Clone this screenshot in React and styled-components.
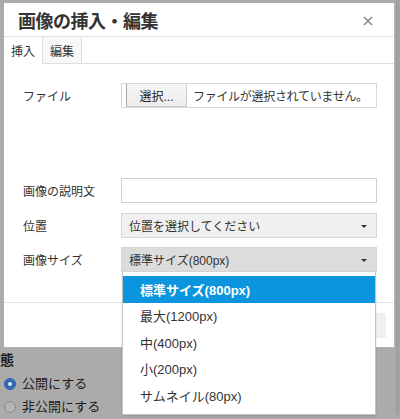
import React from "react";
import styled, { createGlobalStyle } from "styled-components";

const GlobalStyle = createGlobalStyle`
  html, body { margin: 0; padding: 0; }
  body {
    background: #ababab;
    font-family: "Liberation Sans", "Noto Sans CJK JP", sans-serif;
    color: #333;
  }
`;

const Stage = styled.div`
  position: relative;
  width: 400px;
  height: 419px;
  overflow: hidden;
  background: #ababab;
`;

/* page behind the overlay */
const BackPage = styled.div`
  display: flex;
  flex-direction: column;
  padding-top: 352px;
  color: #1b1b1b;
`;

const BackHeading = styled.div`
  font-weight: bold;
  font-size: 14px;
  line-height: 16px;
  margin-left: -14px;
  margin-bottom: 7px;
`;

const RadioList = styled.div`
  display: flex;
  flex-direction: column;
  gap: 5px;
  padding-left: 4px;
`;

const RadioRow = styled.label`
  display: flex;
  align-items: center;
  gap: 6px;
  font-size: 13px;
  line-height: 18px;
`;

const RadioDot = styled.span`
  width: 12px;
  height: 12px;
  border-radius: 50%;
  box-sizing: border-box;
  background: ${(p) => (p.$on ? "#2e6cb8" : "#b4b4b4")};
  border: 1px solid ${(p) => (p.$on ? "#2a62a8" : "#8a8a8a")};
  display: flex;
  align-items: center;
  justify-content: center;
  &::after {
    content: "";
    width: 4px;
    height: 4px;
    border-radius: 50%;
    background: ${(p) => (p.$on ? "#e8e8e8" : "transparent")};
  }
`;

const RightStrip = styled.div`
  position: absolute;
  top: 0;
  right: 0;
  width: 3px;
  height: 415px;
  background: #a2a2a2;
  border-left: 1px solid #9a9a9a;
`;

/* modal */
const Modal = styled.div`
  position: absolute;
  top: 3px;
  left: 4px;
  width: 391px;
  height: 345px;
  background: #fff;
  box-sizing: border-box;
  border: 1px solid #b5b5b5;
  border-top: none;
  border-left: none;
  display: flex;
  flex-direction: column;
`;

const Header = styled.div`
  height: 33px;
  border-bottom: 1px solid #e3e3e3;
  display: flex;
  align-items: center;
  justify-content: space-between;
  padding: 0 21px 0 14px;
`;

const Title = styled.h1`
  margin: 0;
  font-size: 18px;
  font-weight: bold;
  color: #333;
  font-family: "Noto Sans CJK JP", sans-serif;
  letter-spacing: -0.5px;
`;

const CloseIcon = styled.svg`
  width: 10px;
  height: 10px;
  margin-top: 2px;
`;

const TabBar = styled.div`
  display: flex;
  height: 26px;
  border-bottom: 1px solid #dedede;
`;

const Tab = styled.div`
  width: 38px;
  display: flex;
  align-items: center;
  justify-content: center;
  font-size: 12px;
  font-family: "Noto Sans CJK JP", sans-serif;
  color: #333;
  border-right: 1px solid #dedede;
  background: ${(p) => (p.$active ? "#fff" : "#f8f8f8")};
  margin-bottom: ${(p) => (p.$active ? "-1px" : "0")};
`;

const Body = styled.div`
  flex: 1;
  display: flex;
  flex-direction: column;
  padding: 19px 17px 0 19px;
`;

const Row = styled.div`
  display: flex;
  align-items: center;
  height: 25px;
  margin-top: ${(p) => p.$mt || 0}px;
`;

const Label = styled.div`
  width: 98px;
  font-size: 12px;
  color: #333;
  font-family: "Noto Sans CJK JP", sans-serif;
`;

const FileBox = styled.div`
  flex: 1;
  height: 25px;
  box-sizing: border-box;
  border: 1px solid #d8d8d8;
  display: flex;
  align-items: stretch;
  padding-left: 4px;
  gap: 6px;
`;

const FileButton = styled.div`
  width: 61px;
  box-sizing: border-box;
  border-left: 1px solid #a8a8a8;
  border-right: 1px solid #cfcfcf;
  border-bottom: 1px solid #c8c8c8;
  background: linear-gradient(#f6f6f6, #ececec);
  display: flex;
  align-items: center;
  justify-content: center;
  font-size: 12px;
  color: #222;
`;

const FileText = styled.div`
  display: flex;
  align-items: center;
  font-size: 12px;
  color: #333;
  letter-spacing: -0.3px;
`;

const TextInput = styled.div`
  flex: 1;
  height: 25px;
  box-sizing: border-box;
  border: 1px solid #cfcfcf;
  background: #fff;
`;

const SelectWrap = styled.div`
  position: relative;
  flex: 1;
  height: 25px;
`;

const SelectBox = styled.div`
  height: 25px;
  box-sizing: border-box;
  border: 1px solid #d6d6d6;
  background: ${(p) => (p.$open ? "#dcdcdc" : "#f0f0f0")};
  display: flex;
  align-items: center;
  justify-content: space-between;
  padding: 0 9px 0 7px;
  font-size: 12px;
  color: #333;
`;

const Caret = styled.span`
  width: 0;
  height: 0;
  border-left: 3px solid transparent;
  border-right: 3px solid transparent;
  border-top: 3px solid #333;
  margin-top: 1px;
`;

const DropList = styled.div`
  position: absolute;
  top: 100%;
  left: 1px;
  right: 1px;
  z-index: 5;
  background: #fff;
  border: 1px solid #c4c4c4;
  border-top: none;
  padding: 4px 0 5px;
  box-shadow: 0 1px 2px rgba(0, 0, 0, 0.15);
`;

const Option = styled.div`
  height: 26.5px;
  display: flex;
  align-items: center;
  padding-left: 17px;
  font-size: 13px;
  color: ${(p) => (p.$sel ? "#fff" : "#333")};
  background: ${(p) => (p.$sel ? "#0b95de" : "transparent")};
  font-weight: ${(p) => (p.$sel ? "bold" : "normal")};
`;

const Footer = styled.div`
  height: 44px;
  border-top: 1px solid #e3e3e3;
  display: flex;
  align-items: center;
  justify-content: flex-end;
  padding-right: 8px;
`;

const FooterButton = styled.div`
  width: 56px;
  height: 25px;
  background: #f0f0f0;
  border-radius: 2px;
`;

const options = [
  "標準サイズ(800px)",
  "最大(1200px)",
  "中(400px)",
  "小(200px)",
  "サムネイル(80px)",
];

export default function App() {
  return (
    <>
      <GlobalStyle />
      <Stage>
        <BackPage>
          <BackHeading>状態</BackHeading>
          <RadioList>
            <RadioRow>
              <RadioDot $on />
              公開にする
            </RadioRow>
            <RadioRow>
              <RadioDot />
              非公開にする
            </RadioRow>
          </RadioList>
        </BackPage>
        <RightStrip />
        <Modal>
          <Header>
            <Title>画像の挿入・編集</Title>
            <CloseIcon viewBox="0 0 10 10">
              <path d="M1 1 L9 9 M9 1 L1 9" stroke="#888" strokeWidth="1.6" />
            </CloseIcon>
          </Header>
          <TabBar>
            <Tab $active>挿入</Tab>
            <Tab>編集</Tab>
          </TabBar>
          <Body>
            <Row>
              <Label>ファイル</Label>
              <FileBox>
                <FileButton>選択...</FileButton>
                <FileText>ファイルが選択されていません。</FileText>
              </FileBox>
            </Row>
            <Row $mt={70}>
              <Label>画像の説明文</Label>
              <TextInput />
            </Row>
            <Row $mt={10}>
              <Label>位置</Label>
              <SelectWrap>
                <SelectBox>
                  位置を選択してください
                  <Caret />
                </SelectBox>
              </SelectWrap>
            </Row>
            <Row $mt={9}>
              <Label>画像サイズ</Label>
              <SelectWrap>
                <SelectBox $open>
                  標準サイズ(800px)
                  <Caret />
                </SelectBox>
                <DropList>
                  {options.map((o, i) => (
                    <Option key={o} $sel={i === 0}>
                      {o}
                    </Option>
                  ))}
                </DropList>
              </SelectWrap>
            </Row>
          </Body>
          <Footer>
            <FooterButton />
          </Footer>
        </Modal>
      </Stage>
    </>
  );
}
